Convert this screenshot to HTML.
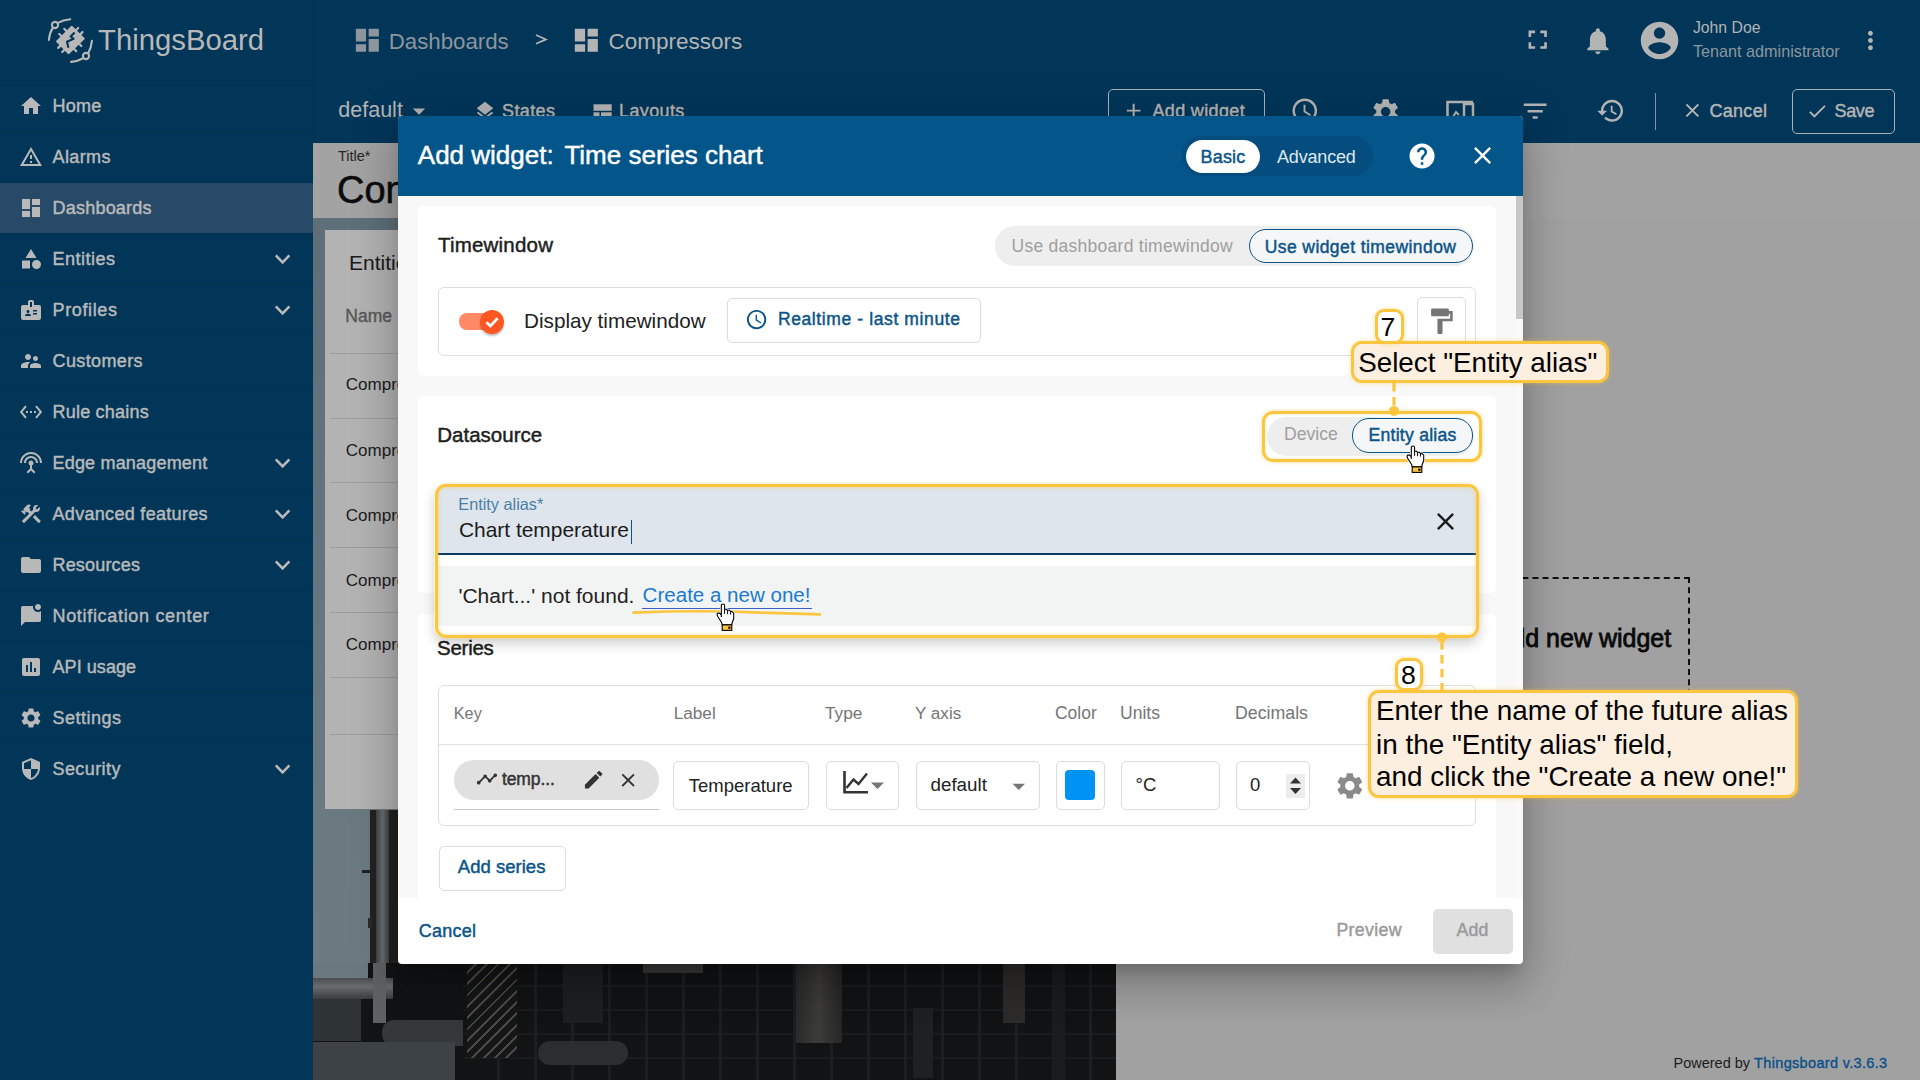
<!DOCTYPE html>
<html><head><meta charset="utf-8">
<style>
*{box-sizing:border-box;margin:0;padding:0}
html,body{width:1920px;height:1080px;overflow:hidden;font-family:"Liberation Sans",sans-serif;background:#a1a1a1;position:relative}
.a{position:absolute}
svg{display:block;position:absolute}
.nw{white-space:nowrap}
/* sidebar */
#side{left:0;top:0;width:313px;height:1080px;background:#013659}
.mi{position:absolute;left:0;width:313px;height:51px;color:#b9b9b9;font-size:18px;-webkit-text-stroke:0.45px #b9b9b9}
.mi svg.ic{left:19px;top:13px;width:24px;height:24px;fill:#b9b9b9}
.mi .tx{position:absolute;left:52.5px;top:14.9px;white-space:nowrap;line-height:20px}
.mi svg.ch{left:274px;top:13px;width:26px;height:26px}
.mi .ln{position:absolute;left:0;bottom:0;width:313px;height:1px;background:#03324f}
#top{left:313px;top:0;width:1607px;height:143px;background:#013659}
.ti{fill:#b4b4b4}
</style></head>
<body>
<!-- dashboard background -->
<div class="a" style="left:313px;top:143px;width:1607px;height:937px;background:#a1a1a1"></div>
<!-- photo -->
<div class="a" id="photo" style="left:313px;top:218px;width:803px;height:862px;overflow:hidden;background:linear-gradient(180deg,#5e6f7a 0%,#65757f 40%,#6b7981 70%,#6f7b83 100%)">
  <!-- tower left strip -->
  <div class="a" style="left:57px;top:592px;width:30px;height:170px;background:#24221f"></div>
  <div class="a" style="left:63px;top:592px;width:13px;height:170px;background:linear-gradient(90deg,#3e4244,#6a6e70 50%,#3e4244)"></div>
  <div class="a" style="left:49px;top:652px;width:10px;height:3px;background:#222"></div>
  <div class="a" style="left:49px;top:700px;width:10px;height:10px;background:#2a2a2a"></div>
  <!-- bottom strip -->
  <div class="a" style="left:0;top:745px;width:803px;height:117px;background:#111315"></div>
  <div class="a" style="left:150px;top:745px;width:653px;height:117px;background:repeating-linear-gradient(90deg,transparent 0 34px,#1c1f22 34px 37px),repeating-linear-gradient(180deg,transparent 0 22px,#1a1d20 22px 24px)"></div>
  <div class="a" style="left:0;top:690px;width:55px;height:70px;background:#6e7a82"></div>
  <div class="a" style="left:20px;top:760px;width:60px;height:21px;background:linear-gradient(180deg,#4a4d50,#6a6c6e 40%,#3a3c3e)"></div>
  <div class="a" style="left:0;top:745px;width:55px;height:16px;background:#6b7880"></div>
  <div class="a" style="left:0;top:760px;width:62px;height:21px;background:linear-gradient(180deg,#4a4d50,#6a6c6e 40%,#3a3c3e)"></div>
  <div class="a" style="left:0;top:781px;width:48px;height:42px;background:#2e3336"></div>
  <div class="a" style="left:60px;top:745px;width:13px;height:60px;background:#5e6264"></div>
  <div class="a" style="left:69px;top:802px;width:81px;height:26px;background:#35383a;border-radius:12px 0 0 12px"></div>
  <div class="a" style="left:0;top:824px;width:142px;height:38px;background:#3d4246"></div>
  <div class="a" style="left:154px;top:745px;width:50px;height:95px;background:repeating-linear-gradient(135deg,#151617 0 6px,#4d4840 6px 8px)"></div>
  <div class="a" style="left:225px;top:823px;width:90px;height:24px;background:#2b2e31;border-radius:12px"></div>
  <div class="a" style="left:250px;top:745px;width:40px;height:60px;background:#1d1f21"></div>
  <div class="a" style="left:483px;top:745px;width:46px;height:80px;background:linear-gradient(90deg,#2a2a2a,#3d3c3b 50%,#262626)"></div>
  <div class="a" style="left:690px;top:745px;width:22px;height:60px;background:#2e2c2a"></div>
  <div class="a" style="left:330px;top:745px;width:60px;height:10px;background:#3b3a38"></div>
  <div class="a" style="left:600px;top:790px;width:20px;height:70px;background:#1d2124"></div>
  <div class="a" style="left:740px;top:745px;width:12px;height:117px;background:#1a1d20"></div>
</div>
<!-- title band -->
<div class="a" style="left:313px;top:143px;width:1607px;height:75px;background:#a3a3a3"></div>
<div class="a nw" style="left:338px;top:149px;font-size:14.5px;line-height:14.5px;color:#262626">Title*</div>
<div class="a nw" style="left:337px;top:171.3px;font-size:38px;line-height:38px;color:#0c0c0c;-webkit-text-stroke:0.6px #0c0c0c">Compressors</div>
<!-- entities card -->
<div class="a" style="left:325px;top:230px;width:400px;height:579px;background:#b3b3b3">
  <div class="a nw" style="left:24px;top:21.6px;font-size:21px;line-height:21px;color:#1a1a1a">Entities</div>
  <div class="a nw" style="left:20.3px;top:78px;font-size:17.5px;line-height:17.5px;color:#595959;-webkit-text-stroke:0.4px #595959">Name</div>
  <div class="a" style="left:5px;top:123px;width:395px;height:1px;background:#9c9c9c"></div>
  <div class="a nw" style="left:20.8px;top:146.4px;font-size:17px;line-height:17px;color:#1c1c1c">Compressor 1</div>
  <div class="a" style="left:5px;top:188px;width:395px;height:1px;background:#9c9c9c"></div>
  <div class="a nw" style="left:20.8px;top:211.6px;font-size:17px;line-height:17px;color:#1c1c1c">Compressor 2</div>
  <div class="a" style="left:5px;top:252px;width:395px;height:1px;background:#9c9c9c"></div>
  <div class="a nw" style="left:20.8px;top:276.6px;font-size:17px;line-height:17px;color:#1c1c1c">Compressor 3</div>
  <div class="a" style="left:5px;top:317px;width:395px;height:1px;background:#9c9c9c"></div>
  <div class="a nw" style="left:20.8px;top:341.6px;font-size:17px;line-height:17px;color:#1c1c1c">Compressor 4</div>
  <div class="a" style="left:5px;top:382px;width:395px;height:1px;background:#9c9c9c"></div>
  <div class="a nw" style="left:20.8px;top:406.1px;font-size:17px;line-height:17px;color:#1c1c1c">Compressor 5</div>
  <div class="a" style="left:5px;top:447px;width:395px;height:1px;background:#9c9c9c"></div>
  <div class="a" style="left:5px;top:504px;width:395px;height:1px;background:#9c9c9c"></div>
</div>
<!-- add new widget dashed -->
<div class="a" style="left:1300px;top:577px;width:390px;height:180px;border:2.2px dashed #111"></div>
<div class="a nw" style="left:1494.7px;top:625.5px;font-size:25px;line-height:25px;color:#0a0a0a;-webkit-text-stroke:0.8px #0a0a0a">Add new widget</div>

<!-- sidebar -->
<div id="side" class="a">
  <div class="a" style="left:0;top:80px;width:313px;height:1px;background:#03304e"></div><div class="a" style="left:0;top:233px;width:313px;height:1px;background:#02324f"></div><div class="a" style="left:0;top:284px;width:313px;height:1px;background:#02324f"></div><div class="a" style="left:0;top:335px;width:313px;height:1px;background:#02324f"></div><div class="a" style="left:0;top:386px;width:313px;height:1px;background:#02324f"></div><div class="a" style="left:0;top:437px;width:313px;height:1px;background:#02324f"></div><div class="a" style="left:0;top:488px;width:313px;height:1px;background:#02324f"></div><div class="a" style="left:0;top:539px;width:313px;height:1px;background:#02324f"></div><div class="a" style="left:0;top:590px;width:313px;height:1px;background:#02324f"></div><div class="a" style="left:0;top:641px;width:313px;height:1px;background:#02324f"></div><div class="a" style="left:0;top:692px;width:313px;height:1px;background:#02324f"></div><div class="a" style="left:0;top:743px;width:313px;height:1px;background:#02324f"></div><div class="a" style="left:0;top:131px;width:313px;height:1px;background:#02324f"></div><div class="a" style="left:0;top:182px;width:313px;height:1px;background:#02324f"></div>
  <div class="mi" style="top:81px;"><svg class="ic" viewBox="0 0 24 24"><path d="M10 20v-6h4v6h5v-8h3L12 3 2 12h3v8z"/></svg><div class="tx" style="letter-spacing:0.23px">Home</div></div>
  <div class="mi" style="top:132px;"><svg class="ic" viewBox="0 0 24 24"><path d="M12 5.99L19.53 19H4.47L12 5.99M12 2L1 21h22L12 2zm1 14h-2v2h2v-2zm0-6h-2v4h2v-4z"/></svg><div class="tx" style="letter-spacing:0.40px">Alarms</div></div>
  <div class="mi" style="top:183px;"><div class="a" style="left:0;top:0;width:313px;height:50px;background:#284a69"></div><svg class="ic" viewBox="0 0 24 24"><path d="M3 13h8V3H3v10zm0 8h8v-6H3v6zm10 0h8V11h-8v10zm0-18v6h8V3h-8z"/></svg><div class="tx" style="letter-spacing:0.22px">Dashboards</div></div>
  <div class="mi" style="top:234px;"><svg class="ic" viewBox="0 0 24 24"><path d="M12 2l-5.5 9h11zM17.5 13a4.5 4.5 0 1 0 0 9a4.5 4.5 0 1 0 0-9zM3 13.5h8v8H3z"/></svg><div class="tx" style="letter-spacing:0.51px">Entities</div><svg class="ch" viewBox="0 0 26 26"><path d="M1.8 8.4 L8.6 15.3 L15.4 8.4" fill="none" stroke="#b9b9b9" stroke-width="2.6"/></svg></div>
  <div class="mi" style="top:285px;"><svg class="ic" viewBox="0 0 24 24"><path d="M20 7h-5V4c0-1.1-.9-2-2-2h-2c-1.1 0-2 .9-2 2v3H4c-1.1 0-2 .9-2 2v11c0 1.1.9 2 2 2h16c1.1 0 2-.9 2-2V9c0-1.1-.9-2-2-2zM9 12c.83 0 1.5.67 1.5 1.5S9.83 15 9 15s-1.5-.67-1.5-1.5S8.17 12 9 12zm3 6H6v-.43c0-.6.36-1.15.92-1.39.64-.28 1.34-.43 2.08-.43s1.44.15 2.08.43c.55.24.92.78.92 1.39V18zm1-9h-2V4h2v5zm5 7.5h-4V15h4v1.5zm0-3h-4V12h4v1.5z"/></svg><div class="tx" style="letter-spacing:0.64px">Profiles</div><svg class="ch" viewBox="0 0 26 26"><path d="M1.8 8.4 L8.6 15.3 L15.4 8.4" fill="none" stroke="#b9b9b9" stroke-width="2.6"/></svg></div>
  <div class="mi" style="top:336px;"><svg class="ic" viewBox="0 0 24 24"><path d="M16.5 12c1.38 0 2.49-1.12 2.49-2.5S17.88 7 16.5 7C15.12 7 14 8.12 14 9.5s1.12 2.5 2.5 2.5zM9 11c1.66 0 2.99-1.34 2.99-3S10.66 5 9 5C7.34 5 6 6.34 6 8s1.34 3 3 3zm7.5 3c-1.83 0-5.5.92-5.5 2.75V19h11v-2.25c0-1.83-3.67-2.75-5.5-2.75zM9 13c-2.34 0-7 1.17-7 3.5V19h7v-2.25c0-.85.33-2.34 2.37-3.47C10.5 13.1 9.66 13 9 13z"/></svg><div class="tx" style="letter-spacing:0.38px">Customers</div></div>
  <div class="mi" style="top:387px;"><svg class="ic" viewBox="0 0 24 24"><path d="M7.77 6.76L6.23 5.48.82 12l5.41 6.52 1.54-1.28L3.42 12l4.35-5.24zM7 13h2v-2H7v2zm10-2h-2v2h2v-2zm-6 2h2v-2h-2v2zm6.77-7.52l-1.54 1.28L20.58 12l-4.35 5.24 1.54 1.28L23.18 12l-5.41-6.52z"/></svg><div class="tx" style="letter-spacing:0.22px">Rule chains</div></div>
  <div class="mi" style="top:438px;"><svg class="ic" viewBox="0 0 24 24"><path d="M12 5c-3.87 0-7 3.13-7 7h2c0-2.76 2.24-5 5-5s5 2.24 5 5h2c0-3.87-3.13-7-7-7zm1 9.29c.88-.39 1.5-1.26 1.5-2.29 0-1.38-1.12-2.5-2.5-2.5S9.5 10.62 9.5 12c0 1.02.62 1.9 1.5 2.29v3.3L7.59 21 9 22.41l3-3 3 3L16.41 21 13 17.59v-3.3zM12 1C5.93 1 1 5.93 1 12h2c0-4.97 4.03-9 9-9s9 4.03 9 9h2c0-6.07-4.93-11-11-11z"/></svg><div class="tx" style="letter-spacing:0.19px">Edge management</div><svg class="ch" viewBox="0 0 26 26"><path d="M1.8 8.4 L8.6 15.3 L15.4 8.4" fill="none" stroke="#b9b9b9" stroke-width="2.6"/></svg></div>
  <div class="mi" style="top:489px;"><svg class="ic" viewBox="0 0 24 24"><path d="M13.783 15.172l2.121-2.121 5.996 5.996-2.121 2.121zM17.5 10c1.93 0 3.5-1.57 3.5-3.5 0-.58-.16-1.12-.41-1.6l-2.7 2.7-1.49-1.49 2.7-2.7c-.48-.25-1.02-.41-1.6-.41C15.57 3 14 4.57 14 6.5c0 .41.08.8.21 1.16l-1.85 1.85-1.78-1.78.71-.71-1.41-1.41L12 3.49c-1.17-1.17-3.07-1.170-4.24 0L4.22 7.03l1.41 1.41H2.81l-.71.71 3.54 3.54.71-.71V9.15l1.41 1.41.71-.71 1.78 1.78-7.41 7.41 2.12 2.12L16.34 9.79c.36.13.75.21 1.16.21z"/></svg><div class="tx" style="letter-spacing:0.31px">Advanced features</div><svg class="ch" viewBox="0 0 26 26"><path d="M1.8 8.4 L8.6 15.3 L15.4 8.4" fill="none" stroke="#b9b9b9" stroke-width="2.6"/></svg></div>
  <div class="mi" style="top:540px;"><svg class="ic" viewBox="0 0 24 24"><path d="M10 4H4c-1.1 0-1.99.9-1.99 2L2 18c0 1.1.9 2 2 2h16c1.1 0 2-.9 2-2V8c0-1.1-.9-2-2-2h-8l-2-2z"/></svg><div class="tx" style="letter-spacing:0.18px">Resources</div><svg class="ch" viewBox="0 0 26 26"><path d="M1.8 8.4 L8.6 15.3 L15.4 8.4" fill="none" stroke="#b9b9b9" stroke-width="2.6"/></svg></div>
  <div class="mi" style="top:591px;"><svg class="ic" viewBox="0 0 24 24"><path d="M22 6.98V16c0 1.1-.9 2-2 2H6l-4 4V4c0-1.1.9-2 2-2h10.1c-.06.32-.1.66-.1 1 0 2.76 2.24 5 5 5 1.13 0 2.16-.39 3-1.02zM16 3c0 1.66 1.34 3 3 3s3-1.34 3-3-1.34-3-3-3-3 1.34-3 3z"/></svg><div class="tx" style="letter-spacing:0.68px">Notification center</div></div>
  <div class="mi" style="top:642px;"><svg class="ic" viewBox="0 0 24 24"><path d="M19 3H5c-1.1 0-2 .9-2 2v14c0 1.1.9 2 2 2h14c1.1 0 2-.9 2-2V5c0-1.1-.9-2-2-2zM9 17H7v-7h2v7zm4 0h-2V7h2v10zm4 0h-2v-4h2v4z"/></svg><div class="tx" style="letter-spacing:0.06px">API usage</div></div>
  <div class="mi" style="top:693px;"><svg class="ic" viewBox="0 0 24 24"><path d="M19.14 12.94c.04-.3.06-.61.06-.94 0-.32-.02-.64-.07-.94l2.03-1.58c.18-.14.23-.41.12-.61l-1.92-3.32c-.12-.22-.37-.29-.59-.22l-2.39.96c-.5-.38-1.03-.7-1.62-.94l-.36-2.54c-.04-.24-.24-.41-.48-.41h-3.84c-.24 0-.43.17-.47.41l-.36 2.54c-.59.24-1.13.57-1.62.94l-2.39-.96c-.22-.08-.47 0-.59.22L2.74 8.87c-.12.21-.08.47.12.61l2.03 1.58c-.05.3-.09.63-.09.94s.02.64.07.94l-2.03 1.58c-.18.14-.23.41-.12.61l1.92 3.32c.12.22.37.29.59.22l2.39-.96c.5.38 1.03.7 1.62.94l.36 2.54c.05.24.24.41.48.41h3.84c.24 0 .44-.17.47-.41l.36-2.54c.59-.24 1.13-.56 1.62-.94l2.39.96c.22.08.47 0 .59-.22l1.92-3.32c.12-.22.07-.47-.12-.61l-2.01-1.58zM12 15.6c-1.98 0-3.6-1.62-3.6-3.6s1.62-3.6 3.6-3.6 3.6 1.62 3.6 3.6-1.62 3.6-3.6 3.6z"/></svg><div class="tx" style="letter-spacing:0.51px">Settings</div></div>
  <div class="mi" style="top:744px;"><svg class="ic" viewBox="0 0 24 24"><path d="M12 1L3 5v6c0 5.55 3.84 10.74 9 12 5.16-1.26 9-6.45 9-12V5l-9-4zm0 10.99h7c-.53 4.12-3.28 7.790-7 8.94V12H5V6.3l7-3.11v8.8z"/></svg><div class="tx" style="letter-spacing:0.41px">Security</div><svg class="ch" viewBox="0 0 26 26"><path d="M1.8 8.4 L8.6 15.3 L15.4 8.4" fill="none" stroke="#b9b9b9" stroke-width="2.6"/></svg></div>
</div>
<!-- top bar -->
<div id="top" class="a"></div>
<div class="a" style="left:313px;top:0;width:1px;height:143px;background:#032f4d"></div>

<!-- logo -->
<svg style="left:40px;top:10px;width:60px;height:60px" viewBox="0 0 60 60">
  <g fill="none" stroke="#b8b8b8" stroke-width="2.1" stroke-linecap="round">
    <path d="M30.3 9.2 Q23 9.8 18 12.8"/>
    <circle cx="15" cy="15" r="3.1"/>
    <path d="M12.9 17.6 Q9.4 23 8.9 30"/>
    <path d="M51.9 30.8 Q51.2 38 48.2 43.2"/>
    <circle cx="46" cy="46" r="3.1"/>
    <path d="M43.2 48.2 Q37 51.5 31.1 51.9"/>
    <path d="M21.5 26.3 L19.2 24 M26.6 21.2 L24.3 18.9 M35.9 20.3 L38.2 18 M40.2 24.4 L42.5 22.1 M39.1 33.7 L41.4 36 M33.9 38.8 L36.2 41.1 M24.5 39.7 L22.2 42 M20.5 35.6 L18.2 37.9" stroke-width="2.2"/>
  </g>
  <path d="M31.7 16.6 L43.9 28.6 L28.6 43.4 L16.9 31.4 Z" fill="#b8b8b8" stroke="#b8b8b8" stroke-width="1.6" stroke-linejoin="round"/>
  <path d="M34.6 22.6 L30.6 26.4 L33.6 28.8 L27 31.8 L28.4 37.8" fill="none" stroke="#013659" stroke-width="2.1" stroke-linejoin="round"/>
</svg>
<div class="a nw" style="left:98px;top:25px;font-size:29.3px;line-height:29.3px;color:#b8b8b8">ThingsBoard</div>

<!-- breadcrumb -->
<svg style="left:352px;top:25px;width:30.7px;height:30.7px;fill:#8e959c" viewBox="0 0 24 24"><path d="M3 13h8V3H3v10zm0 8h8v-6H3v6zm10 0h8V11h-8v10zm0-18v6h8V3h-8z"/></svg>
<div class="a nw" style="left:388.7px;top:30.9px;font-size:22.25px;line-height:22.25px;color:#8e959c">Dashboards</div>
<svg style="left:530px;top:30px;width:22px;height:20px" viewBox="530 30 22 20"><path d="M536 35 L546 39.4 L536 43.7" fill="none" stroke="#b4b4b4" stroke-width="1.7"/></svg>
<svg style="left:571.2px;top:25px;width:30.7px;height:30.7px;fill:#b4b4b4" viewBox="0 0 24 24"><path d="M3 13h8V3H3v10zm0 8h8v-6H3v6zm10 0h8V11h-8v10zm0-18v6h8V3h-8z"/></svg>
<div class="a nw" style="left:608.4px;top:30.7px;font-size:22.5px;line-height:22.5px;color:#b4b4b4">Compressors</div>

<!-- right header -->
<svg style="left:1521.8px;top:23.8px;width:31.4px;height:31.4px;fill:#b4b4b4" viewBox="0 0 24 24"><path d="M7 14H5v5h5v-2H7v-3zm-2-4h2V7h3V5H5v5zm12 7h-3v2h5v-5h-2v3zM14 5v2h3v3h2V5h-5z"/></svg>
<svg style="left:1581.5px;top:24.6px;width:31.8px;height:31.8px;fill:#b4b4b4" viewBox="0 0 24 24"><path d="M12 22c1.1 0 2-.9 2-2h-4c0 1.1.89 2 2 2zm6-6v-5c0-3.07-1.64-5.64-4.5-6.32V4c0-.83-.67-1.5-1.5-1.5s-1.5.67-1.5 1.5v.68C7.63 5.36 6 7.92 6 11v5l-2 2v1h16v-1l-2-2z"/></svg>
<svg style="left:1637.2px;top:17.8px;width:45.1px;height:45.1px;fill:#b4b4b4" viewBox="0 0 24 24"><path d="M12 2C6.48 2 2 6.48 2 12s4.48 10 10 10 10-4.48 10-10S17.52 2 12 2zm0 3c1.66 0 3 1.34 3 3s-1.34 3-3 3-3-1.34-3-3 1.34-3 3-3zm0 14.2c-2.5 0-4.71-1.28-6-3.22.03-1.99 4-3.08 6-3.08 1.99 0 5.970 1.09 6 3.08-1.29 1.94-3.5 3.22-6 3.22z"/></svg>
<div class="a nw" style="left:1692.9px;top:20px;font-size:15.8px;line-height:15.8px;color:#b4b4b4">John Doe</div>
<div class="a nw" style="left:1693px;top:43.4px;font-size:16.2px;line-height:16.2px;color:#8e969d">Tenant administrator</div>
<svg style="left:1855.9px;top:25.5px;width:28.9px;height:28.9px;fill:#b4b4b4" viewBox="0 0 24 24"><path d="M12 8c1.1 0 2-.9 2-2s-.9-2-2-2-2 .9-2 2 .9 2 2 2zm0 2c-1.1 0-2 .9-2 2s.9 2 2 2 2-.9 2-2-.9-2-2-2zm0 6c-1.1 0-2 .9-2 2s.9 2 2 2 2-.9 2-2-.9-2-2-2z"/></svg>

<!-- row 2 -->
<div class="a nw" style="left:338.3px;top:100px;font-size:21.5px;line-height:21.5px;color:#b4b4b4">default</div>
<svg style="left:404px;top:95.5px;width:30px;height:30px;fill:#b4b4b4" viewBox="0 0 24 24"><path d="M7 10l5 5 5-5z"/></svg>
<svg style="left:474px;top:99.7px;width:22px;height:22px;fill:#b4b4b4" viewBox="0 0 24 24"><path d="M11.99 18.54l-7.37-5.730L3 14.07l9 7 9-7-1.63-1.27-7.38 5.74zM12 16l7.36-5.73L21 9l-9-7-9 7 1.63 1.27L12 16z"/></svg>
<div class="a nw" style="left:502.0px;top:102.4px;font-size:18px;line-height:18px;letter-spacing:0.40px;color:#b4b4b4;-webkit-text-stroke:0.45px #b4b4b4">States</div>
<svg style="left:593px;top:104px;width:20px;height:16px;fill:#b4b4b4" viewBox="0 0 20 16"><rect x="0.5" y="0.3" width="18.2" height="6.5"/><rect x="0.5" y="8.3" width="6" height="7"/><rect x="8" y="8.3" width="10.7" height="7"/></svg>
<div class="a nw" style="left:619.0px;top:102.4px;font-size:18px;line-height:18px;letter-spacing:0.37px;color:#b4b4b4;-webkit-text-stroke:0.45px #b4b4b4">Layouts</div>

<div class="a" style="left:1108px;top:89px;width:157px;height:45px;border:1.3px solid #a9b1b8;border-radius:5px"></div>
<svg style="left:1122px;top:99px;width:23.3px;height:23.3px;fill:#b4b4b4" viewBox="0 0 24 24"><path d="M19 13h-6v6h-2v-6H5v-2h6V5h2v6h6v2z"/></svg>
<div class="a nw" style="left:1152.4px;top:102.0px;font-size:18px;line-height:18px;letter-spacing:0.36px;color:#b4b4b4;-webkit-text-stroke:0.45px #b4b4b4">Add widget</div>
<svg style="left:1290.1px;top:95.7px;width:29.6px;height:29.6px;fill:#b4b4b4" viewBox="0 0 24 24"><path d="M11.99 2C6.47 2 2 6.48 2 12s4.47 10 9.99 10C17.52 22 22 17.52 22 12S17.52 2 11.99 2zM12 20c-4.42 0-8-3.58-8-8s3.58-8 8-8 8 3.58 8 8-3.58 8-8 8zm.5-13H11v6l5.25 3.15.75-1.23-4.5-2.67z"/></svg>
<svg style="left:1369.5px;top:95.6px;width:31.3px;height:31.3px;fill:#b4b4b4" viewBox="0 0 24 24"><path d="M19.14 12.94c.04-.3.06-.61.06-.94 0-.32-.02-.64-.07-.94l2.03-1.58c.18-.14.23-.41.12-.61l-1.92-3.32c-.12-.22-.37-.29-.59-.22l-2.39.96c-.5-.38-1.03-.7-1.62-.94l-.36-2.54c-.04-.24-.24-.41-.48-.41h-3.84c-.24 0-.43.17-.47.41l-.36 2.54c-.59.24-1.13.57-1.62.94l-2.39-.96c-.22-.08-.47 0-.59.22L2.74 8.87c-.12.21-.08.47.12.61l2.03 1.58c-.05.3-.09.63-.09.94s.02.64.07.94l-2.03 1.58c-.18.14-.23.41-.12.61l1.92 3.32c.12.22.37.29.59.22l2.39-.96c.5.38 1.03.7 1.62.94l.36 2.54c.05.24.24.41.48.41h3.84c.24 0 .44-.17.47-.41l.36-2.54c.59-.24 1.13-.56 1.62-.94l2.39.96c.22.08.47 0 .59-.22l1.92-3.32c.12-.22.07-.47-.12-.61l-2.01-1.58zM12 15.6c-1.98 0-3.6-1.62-3.6-3.6s1.62-3.6 3.6-3.6 3.6 1.62 3.6 3.6-1.62 3.6-3.6 3.6z"/></svg>
<svg style="left:1446px;top:100px;width:30px;height:20px" viewBox="0 0 30 20"><path d="M1.5 16 V2 H27" fill="none" stroke="#b4b4b4" stroke-width="2.6"/><rect x="18" y="4" width="9" height="14" fill="none" stroke="#b4b4b4" stroke-width="2.5"/><path d="M7 17 L10 12 L13 15" fill="none" stroke="#b4b4b4" stroke-width="2"/></svg>
<svg style="left:1519.9px;top:95.7px;width:30.3px;height:30.3px;fill:#b4b4b4" viewBox="0 0 24 24"><path d="M10 18h4v-2h-4v2zM3 6v2h18V6H3zm3 7h12v-2H6v2z"/></svg>
<svg style="left:1595.6px;top:95.9px;width:29.5px;height:29.5px;fill:#b4b4b4" viewBox="0 0 24 24"><path d="M13 3c-4.97 0-9 4.03-9 9H1l3.89 3.89.07.14L9 12H6c0-3.87 3.13-7 7-7s7 3.13 7 7-3.13 7-7 7c-1.93 0-3.68-.79-4.94-2.06l-1.42 1.42C8.27 19.99 10.51 21 13 21c4.97 0 9-4.03 9-9s-4.03-9-9-9zm-1 5v5l4.28 2.54.72-1.21-3.5-2.08V8H12z"/></svg>
<div class="a" style="left:1655px;top:93px;width:1.2px;height:37px;background:#8294a3"></div>
<svg style="left:1680.75px;top:99.1px;width:22.8px;height:22.8px;fill:#b4b4b4" viewBox="0 0 24 24"><path d="M19 6.41L17.590 5 12 10.59 6.41 5 5 6.41 10.59 12 5 17.59 6.41 19 12 13.41 17.59 19 19 17.59 13.41 12z"/></svg>
<div class="a nw" style="left:1709.4px;top:101.7px;font-size:18px;line-height:18px;letter-spacing:0.32px;color:#b4b4b4;-webkit-text-stroke:0.45px #b4b4b4">Cancel</div>
<div class="a" style="left:1792px;top:89px;width:103px;height:45px;border:1.3px solid #a9b1b8;border-radius:5px"></div>
<svg style="left:1806.3px;top:99.5px;width:22.4px;height:22.4px;fill:#b4b4b4" viewBox="0 0 24 24"><path d="M9 16.17L4.83 12l-1.42 1.41L9 19 21 7l-1.41-1.41z"/></svg>
<div class="a nw" style="left:1834.5px;top:101.7px;font-size:18px;line-height:18px;letter-spacing:-0.33px;color:#b4b4b4;-webkit-text-stroke:0.45px #b4b4b4">Save</div>



<!-- ============ MODAL ============ -->
<div class="a" style="left:398px;top:116px;width:1125px;height:848px;background:#fff;border-radius:4px;box-shadow:0 11px 15px -7px rgba(0,0,0,.2),0 24px 38px 3px rgba(0,0,0,.14),0 9px 46px 8px rgba(0,0,0,.12)"></div>
<div class="a" style="left:398px;top:116px;width:1125px;height:80px;background:#03558a;border-radius:4px 4px 0 0"></div>
<div class="a nw" style="left:417.8px;top:142.0px;font-size:26px;line-height:26px;color:#fff;-webkit-text-stroke:0.45px #fff">Add widget:</div><div class="a nw" style="left:564.4px;top:142.0px;font-size:26px;line-height:26px;color:#fff;-webkit-text-stroke:0.45px #fff">Time series chart</div>
<div class="a" style="left:1182px;top:136px;width:191px;height:40px;background:#044d7e;border-radius:20px"></div>
<div class="a" style="left:1185.7px;top:140px;width:74.3px;height:33px;background:#fff;border-radius:17px"></div>
<div class="a nw" style="left:1200.6px;top:147.6px;font-size:18px;line-height:18px;letter-spacing:0.15px;color:#0b5488;-webkit-text-stroke:0.45px #0b5488">Basic</div>
<div class="a nw" style="left:1277px;top:147.6px;font-size:18px;line-height:18px;letter-spacing:-0.17px;color:#dfe8ef">Advanced</div>
<svg style="left:1407.4px;top:140.8px;width:30.1px;height:30.1px;fill:#fff" viewBox="0 0 24 24"><path d="M12 2C6.48 2 2 6.48 2 12s4.48 10 10 10 10-4.48 10-10S17.52 2 12 2zm1 17h-2v-2h2v2zm2.07-7.75l-.9.92C13.45 12.9 13 13.5 13 15h-2v-.5c0-1.1.45-2.1 1.17-2.83l1.24-1.26c.37-.36.59-.86.59-1.41 0-1.1-.9-2-2-2s-2 .9-2 2H8c0-2.21 1.79-4 4-4s4 1.79 4 4c0 .88-.36 1.68-.93 2.25z"/></svg>
<svg style="left:1467.9px;top:141.3px;width:29.1px;height:29.1px;fill:#fff" viewBox="0 0 24 24"><path d="M19 6.41L17.59 5 12 10.59 6.41 5 5 6.41 10.59 12 5 17.59 6.41 19 12 13.41 17.59 19 19 17.59 13.41 12z"/></svg>

<!-- body -->
<div class="a" style="left:398px;top:196px;width:1118px;height:702px;background:#f8f8f8"></div>
<div class="a" style="left:1516px;top:196px;width:7px;height:702px;background:#fafafa"></div>
<div class="a" style="left:1516px;top:196px;width:7px;height:123px;background:#c7c7c7"></div>

<!-- card 1 timewindow -->
<div class="a" style="left:418px;top:206px;width:1078px;height:170px;background:#fff;border-radius:5px"></div>
<div class="a nw" style="left:438.0px;top:235.4px;font-size:20.5px;line-height:20.5px;letter-spacing:0.20px;color:#1d1d1d;-webkit-text-stroke:0.45px #1d1d1d">Timewindow</div>
<div class="a" style="left:995px;top:226px;width:478.5px;height:40px;background:#eeeeee;border-radius:20px"></div>
<div class="a" style="left:1249px;top:229.3px;width:224px;height:34px;background:#f4f6f8;border:1.3px solid #0b5488;border-radius:17px"></div>
<div class="a nw" style="left:1011.6px;top:237.6px;font-size:17.5px;line-height:17.5px;letter-spacing:0.26px;color:#9e9e9e">Use dashboard timewindow</div>
<div class="a nw" style="left:1264.7px;top:238.5px;font-size:17.5px;line-height:17.5px;letter-spacing:0.42px;color:#0b5488;-webkit-text-stroke:0.45px #0b5488">Use widget timewindow</div>

<div class="a" style="left:438px;top:286.5px;width:1037.5px;height:69px;border:1.2px solid #dedede;border-radius:6px"></div>
<div class="a" style="left:459px;top:313.3px;width:39px;height:16.3px;background:#ff8a65;border-radius:8px"></div>
<div class="a" style="left:480px;top:309.5px;width:24px;height:24px;background:#ff5722;border-radius:50%;box-shadow:0 2px 2px rgba(0,0,0,.25)"></div>
<svg style="left:480px;top:309.5px;width:24px;height:24px" viewBox="0 0 24 24"><path d="M6.5 12.2 L10.3 16 L17.6 8.3" fill="none" stroke="#fff" stroke-width="2.7"/></svg>
<div class="a nw" style="left:524px;top:311.2px;font-size:20.7px;line-height:20.7px;color:#222">Display timewindow</div>
<div class="a" style="left:727px;top:298px;width:253.5px;height:44.5px;border:1.2px solid #dcdcdc;border-radius:5px"></div>
<svg style="left:744.8px;top:308.4px;width:23.2px;height:23.2px;fill:#0b5488" viewBox="0 0 24 24"><path d="M11.99 2C6.47 2 2 6.48 2 12s4.47 10 9.99 10C17.52 22 22 17.52 22 12S17.52 2 11.99 2zM12 20c-4.42 0-8-3.58-8-8s3.58-8 8-8 8 3.58 8 8-3.58 8-8 8zm.5-13H11v6l5.25 3.15.75-1.23-4.5-2.67z"/></svg>
<div class="a nw" style="left:777.9px;top:310.8px;font-size:17.5px;line-height:17.5px;letter-spacing:0.61px;color:#0b5488;-webkit-text-stroke:0.45px #0b5488">Realtime - last minute</div>
<div class="a" style="left:1416.5px;top:296.5px;width:49.2px;height:49px;border:1.2px solid #dcdcdc;border-radius:5px"></div>
<svg style="left:1425.7px;top:305.5px;width:30.5px;height:30.5px;fill:#757575" viewBox="0 0 24 24"><path d="M18 4V3c0-.55-.45-1-1-1H5c-.55 0-1 .45-1 1v4c0 .55.45 1 1 1h12c.55 0 1-.45 1-1V6h1v4H9v11c0 .55.45 1 1 1h2c.55 0 1-.45 1-1v-9h8V4h-3z"/></svg>

<!-- card 2 datasource -->
<div class="a" style="left:418px;top:396px;width:1078px;height:196.5px;background:#fff;border-radius:5px"></div>
<div class="a nw" style="left:437.3px;top:425.3px;font-size:20.5px;line-height:20.5px;letter-spacing:0.00px;color:#1d1d1d;-webkit-text-stroke:0.45px #1d1d1d">Datasource</div>
<div class="a" style="left:1267.2px;top:416.6px;width:207.2px;height:39px;background:#eeeeee;border-radius:20px"></div>
<div class="a" style="left:1352px;top:418.1px;width:121px;height:34.7px;background:#f4f6f8;border:1.3px solid #0b5488;border-radius:17px"></div>
<div class="a nw" style="left:1284px;top:425.9px;font-size:17.6px;line-height:17.6px;color:#9e9e9e">Device</div>
<div class="a nw" style="left:1368.5px;top:426.7px;font-size:17.6px;line-height:17.6px;letter-spacing:0.25px;color:#0b5488;-webkit-text-stroke:0.45px #0b5488">Entity alias</div>

<!-- card 3 series -->
<div class="a" style="left:418px;top:614px;width:1078px;height:284px;background:#fff;border-radius:5px 5px 0 0"></div>
<div class="a nw" style="left:437.0px;top:638.4px;font-size:20.5px;line-height:20.5px;letter-spacing:-0.25px;color:#1d1d1d;-webkit-text-stroke:0.45px #1d1d1d">Series</div>
<div class="a" style="left:438px;top:684.5px;width:1037.5px;height:141px;border:1.2px solid #dedede;border-radius:6px"></div>
<div class="a" style="left:439px;top:744px;width:1036px;height:1.2px;background:#e0e0e0"></div>
<div class="a nw" style="left:453.75px;top:705.4px;font-size:16.25px;line-height:17.3px;color:#757575">Key</div>
<div class="a nw" style="left:673.75px;top:705.4px;font-size:17.16px;line-height:17.3px;color:#757575">Label</div>
<div class="a nw" style="left:825px;top:705.4px;font-size:17.3px;line-height:17.3px;color:#757575">Type</div>
<div class="a nw" style="left:915px;top:705.4px;font-size:17.1px;line-height:17.3px;color:#757575">Y axis</div>
<div class="a nw" style="left:1055px;top:705.4px;font-size:17.47px;line-height:17.3px;color:#757575">Color</div>
<div class="a nw" style="left:1120px;top:705.4px;font-size:17.56px;line-height:17.3px;color:#757575">Units</div>
<div class="a nw" style="left:1235px;top:705.4px;font-size:17.75px;line-height:17.3px;color:#757575">Decimals</div>

<div class="a" style="left:454px;top:760px;width:205px;height:40px;background:#e0e0e0;border-radius:20px"></div>
<div class="a" style="left:454px;top:809px;width:205px;height:1.2px;background:#c8c8c8"></div>
<svg style="left:475.5px;top:767.5px;width:22px;height:22px;fill:#333" viewBox="0 0 24 24"><path d="M23 8c0 1.1-.9 2-2 2-.18 0-.35-.02-.51-.07l-3.56 3.55c.05.16.07.34.07.52 0 1.1-.9 2-2 2s-2-.9-2-2c0-.18.02-.36.07-.52l-2.55-2.55c-.16.05-.34.07-.52.07s-.36-.02-.52-.07l-4.55 4.56c.05.16.07.33.07.51 0 1.1-.9 2-2 2s-2-.9-2-2 .9-2 2-2c.18 0 .35.02.51.07l4.56-4.55C8.02 9.36 8 9.18 8 9c0-1.1.9-2 2-2s2 .9 2 2c0 .18-.02.36-.07.52l2.55 2.55c.16-.05.34-.07.52-.07s.36.02.52.07l3.55-3.56C19.020 8.35 19 8.18 19 8c0-1.1.9-2 2-2s2 .9 2 2z"/></svg>
<div class="a nw" style="left:502.0px;top:771.4px;font-size:17.5px;line-height:17.5px;letter-spacing:-0.12px;color:#333;-webkit-text-stroke:0.45px #333">temp...</div>
<svg style="left:581.6px;top:768.3px;width:23.3px;height:23.3px;fill:#333" viewBox="0 0 24 24"><path d="M3 17.25V21h3.75L17.81 9.94l-3.75-3.75L3 17.25zM20.71 7.04c.39-.39.39-1.02 0-1.41l-2.34-2.34c-.39-.39-1.02-.39-1.41 0l-1.83 1.83 3.75 3.75 1.83-1.83z"/></svg>
<svg style="left:617.35px;top:768.6px;width:22.3px;height:22.3px;fill:#333" viewBox="0 0 24 24"><path d="M19 6.41L17.59 5 12 10.59 6.41 5 5 6.41 10.59 12 5 17.59 6.41 19 12 13.41 17.59 19 19 17.59 13.41 12z"/></svg>
<div class="a" style="left:673px;top:760.5px;width:136px;height:49px;border:1.2px solid #dcdcdc;border-radius:5px"></div>
<div class="a nw" style="left:688.75px;top:776.8px;font-size:18.5px;line-height:18.5px;color:#222">Temperature</div>
<div class="a" style="left:826px;top:760.5px;width:72.5px;height:49px;border:1.2px solid #dcdcdc;border-radius:5px"></div>
<svg style="left:840px;top:768px;width:50px;height:30px" viewBox="840 768 50 30"><path d="M844.5 771 V792.3 H868" fill="none" stroke="#333" stroke-width="2.6"/><path d="M846.5 788 L853.5 779.5 L858.5 784 L867 773.5" fill="none" stroke="#333" stroke-width="2.4"/><path d="M871 782.5 L884 782.5 L877.5 789z" fill="#757575"/></svg>
<div class="a" style="left:915.5px;top:760.5px;width:124px;height:49px;border:1.2px solid #dcdcdc;border-radius:5px"></div>
<div class="a nw" style="left:930.5px;top:776.1px;font-size:18.8px;line-height:18.8px;color:#222">default</div>
<svg style="left:1010px;top:780px;width:18px;height:12px" viewBox="0 0 18 12"><path d="M2.5 3.7 L15 3.7 L8.75 10z" fill="#757575"/></svg>
<div class="a" style="left:1055.5px;top:760.5px;width:49px;height:49px;border:1.2px solid #dcdcdc;border-radius:5px"></div>
<div class="a" style="left:1065px;top:770px;width:30px;height:29.5px;background:#0093f4;border-radius:4px"></div>
<div class="a" style="left:1120.5px;top:760.5px;width:99px;height:49px;border:1.2px solid #dcdcdc;border-radius:5px"></div>
<div class="a nw" style="left:1135.5px;top:776.3px;font-size:18.5px;line-height:18.5px;color:#222">°C</div>
<div class="a" style="left:1235.5px;top:760.5px;width:74px;height:49px;border:1.2px solid #dcdcdc;border-radius:5px"></div>
<div class="a nw" style="left:1250px;top:776.3px;font-size:18.5px;line-height:18.5px;color:#222">0</div>
<div class="a" style="left:1286px;top:774px;width:19px;height:23.5px;background:#ececec"></div>
<svg style="left:1286px;top:774px;width:19px;height:24px" viewBox="0 0 19 24"><path d="M4 9.5 L9.5 3.5 L15 9.5z M4 14 L9.5 20 L15 14z" fill="#333"/></svg>
<svg style="left:1333.7px;top:769.9px;width:31.6px;height:31.6px;fill:#8a8a8a" viewBox="0 0 24 24"><path d="M19.14 12.94c.04-.3.06-.61.06-.94 0-.32-.02-.64-.07-.94l2.03-1.58c.18-.14.23-.41.12-.61l-1.92-3.32c-.12-.22-.37-.29-.59-.22l-2.39.96c-.5-.38-1.03-.7-1.62-.94l-.36-2.54c-.04-.24-.24-.41-.48-.41h-3.84c-.24 0-.43.17-.47.41l-.36 2.54c-.59.24-1.13.57-1.62.94l-2.39-.96c-.22-.08-.47 0-.59.22L2.74 8.87c-.12.21-.08.47.12.61l2.03 1.58c-.05.3-.09.63-.09.94s.02.64.07.94l-2.03 1.58c-.18.14-.23.41-.12.61l1.92 3.32c.12.22.37.29.59.22l2.39-.96c.5.38 1.03.7 1.62.94l.36 2.54c.05.24.24.41.48.41h3.84c.24 0 .44-.17.47-.41l.36-2.54c.59-.24 1.13-.56 1.62-.94l2.39.96c.22.08.47 0 .59-.22l1.92-3.32c.12-.22.07-.47-.12-.61l-2.01-1.58zM12 15.6c-1.98 0-3.6-1.62-3.6-3.6s1.62-3.6 3.6-3.6 3.6 1.62 3.6 3.6-1.62 3.6-3.6 3.6z"/></svg>

<div class="a" style="left:438.6px;top:846.2px;width:127px;height:44.4px;border:1.2px solid #dcdcdc;border-radius:5px"></div>
<div class="a nw" style="left:457.8px;top:858.3px;font-size:18.5px;line-height:18.5px;letter-spacing:0.02px;color:#0b5488;-webkit-text-stroke:0.45px #0b5488">Add series</div>

<!-- footer -->
<div class="a nw" style="left:418.7px;top:921.8px;font-size:18px;line-height:18px;letter-spacing:0.26px;color:#0b5488;-webkit-text-stroke:0.45px #0b5488">Cancel</div>
<div class="a nw" style="left:1336.4px;top:921.7px;font-size:17.7px;line-height:17.7px;letter-spacing:0.37px;color:#9a9a9a;-webkit-text-stroke:0.45px #9a9a9a">Preview</div>
<div class="a" style="left:1433.2px;top:909.2px;width:79.5px;height:44.5px;background:#e0e0e0;border-radius:5px"></div>
<div class="a nw" style="left:1456.4px;top:921.7px;font-size:17.7px;line-height:17.7px;letter-spacing:0.25px;color:#9a9a9a;-webkit-text-stroke:0.45px #9a9a9a">Add</div>

<!-- entity alias field + autocomplete -->
<div class="a" style="left:434px;top:483.5px;width:1045px;height:154.5px;border-radius:11px;box-shadow:0 6px 12px rgba(0,0,0,.18)"></div>
<div class="a" style="left:437px;top:486.5px;width:1039px;height:148.5px;background:#fff;border-radius:8px;overflow:hidden">
  <div class="a" style="left:0;top:0;width:1039px;height:68.5px;background:#dfe5ec"></div>
  <div class="a" style="left:0;top:66.5px;width:1039px;height:2px;background:#0b3b60"></div>
  <div class="a" style="left:0;top:79.5px;width:1039px;height:60px;background:#f2f3f3"></div>
</div>
<div class="a nw" style="left:458.3px;top:495.9px;font-size:16.27px;line-height:16.27px;color:#4a7ea8">Entity alias*</div>
<div class="a nw" style="left:458.9px;top:519.7px;font-size:20.95px;line-height:20.95px;color:#1b1b1b">Chart temperature</div>
<div class="a" style="left:630.5px;top:519.5px;width:1.6px;height:24px;background:#0b5488"></div>
<svg style="left:1431.25px;top:507px;width:29px;height:29px;fill:#1b1b1b" viewBox="0 0 24 24"><path d="M19 6.41L17.59 5 12 10.59 6.41 5 5 6.41 10.59 12 5 17.59 6.41 19 12 13.41 17.59 19 19 17.59 13.41 12z"/></svg>
<div class="a nw" style="left:458.4px;top:584.7px;font-size:20.99px;line-height:20.99px;color:#222">'Chart...' not found.</div>
<div class="a nw" style="left:642.6px;top:585px;font-size:20.56px;line-height:20.56px;color:#1a7bd0">Create a new one!</div>
<div class="a" style="left:642px;top:607.7px;width:170px;height:1.3px;background:#3b5cc4"></div>
<div class="a" style="left:435.3px;top:483.8px;width:1043.5px;height:154.5px;border:3.2px solid #fcc53e;border-radius:11px;box-shadow:inset 0 0 4px rgba(252,197,62,.5),0 0 3px rgba(252,197,62,.45)"></div>


<!-- ============ CALLOUTS ============ -->
<div class="a" style="left:1261.6px;top:410.6px;width:220.4px;height:51px;border:3.2px solid #fcc53e;border-radius:11px;box-shadow:0 0 4px rgba(252,197,62,.55),inset 0 0 3px rgba(252,197,62,.4)"></div>
<svg style="left:1380px;top:375px;width:30px;height:45px" viewBox="1380 375 30 45"><path d="M1394 383 V410" stroke="#fcc53e" stroke-width="3.2" stroke-dasharray="8.5 5.5"/><circle cx="1394" cy="411" r="5" fill="#fcc53e"/></svg>
<div class="a" style="left:1350.6px;top:341.2px;width:258.4px;height:41.8px;background:#fcefdf;border:3.2px solid #fcc53e;border-radius:11px;box-shadow:0 0 4px rgba(252,197,62,.55)"></div>
<div class="a nw" style="left:1358.2px;top:349px;font-size:27.8px;line-height:27.8px;color:#000">Select "Entity alias"</div>
<div class="a" style="left:1374.6px;top:309.4px;width:29.4px;height:34.6px;background:#fff;border:3.2px solid #fcc53e;border-radius:9px;box-shadow:0 0 4px rgba(252,197,62,.55)"></div>
<div class="a nw" style="left:1380.5px;top:314.1px;font-size:26.6px;line-height:26.6px;color:#000">7</div>

<svg style="left:1430px;top:628px;width:25px;height:65px" viewBox="1430 628 25 65"><path d="M1442 641 V690" stroke="#fcc53e" stroke-width="3.2" stroke-dasharray="8.5 5.5"/><circle cx="1442" cy="637.5" r="5" fill="#fcc53e"/></svg>
<div class="a" style="left:1368.2px;top:689.8px;width:430px;height:107.8px;background:#fcefdf;border:3.2px solid #fcc53e;border-radius:11px;box-shadow:0 0 4px rgba(252,197,62,.55)"></div>
<div class="a nw" style="left:1376px;top:697.4px;font-size:27.86px;line-height:27.86px;color:#000">Enter the name of the future alias</div>
<div class="a nw" style="left:1376px;top:730.6px;font-size:27.86px;line-height:27.86px;color:#000">in the "Entity alias" field,</div>
<div class="a nw" style="left:1376px;top:763.4px;font-size:27.86px;line-height:27.86px;color:#000">and click the "Create a new one!"</div>
<div class="a" style="left:1395.2px;top:657.7px;width:27.6px;height:33.7px;background:#fff;border:3.2px solid #fcc53e;border-radius:9px;box-shadow:0 0 4px rgba(252,197,62,.55)"></div>
<div class="a nw" style="left:1401px;top:661.9px;font-size:26.6px;line-height:26.6px;color:#000">8</div>

<svg style="left:620px;top:600px;width:210px;height:25px" viewBox="620 600 210 25"><path d="M633.5 612.6 Q700 610 760 612.6 Q800 613.8 820 614.4" fill="none" stroke="#fcc53e" stroke-width="2.6" stroke-linecap="round"/></svg>
<svg style="left:717px;top:604px;width:18px;height:28px;overflow:visible" viewBox="0 0 18 28"><path d="M4.3 13 V1.6 Q4.3 0 6 0 Q7.6 0 7.6 1.6 V5.2 H9.8 L10.2 6.2 H12.6 L13.4 7.4 H14.8 L16.7 9.2 V14.8 L15.2 18.5 L14.8 20.7 H5.2 L4.6 18.5 L0.6 12.2 L0 10 L0.6 9.1 H2.6 L4.3 11 Z" fill="#fff" stroke="#fff" stroke-width="2.6" stroke-linejoin="round"/>
<path d="M4.3 13 V1.6 Q4.3 0 6 0 Q7.6 0 7.6 1.6 V5.2 H9.8 L10.2 6.2 H12.6 L13.4 7.4 H14.8 L16.7 9.2 V14.8 L15.2 18.5 L14.8 20.7 H5.2 L4.6 18.5 L0.6 12.2 L0 10 L0.6 9.1 H2.6 L4.3 11 Z" fill="#fff" stroke="#000" stroke-width="1.1"/>
<path d="M7.6 5.2 V9.8 M10.6 6.4 V10.2 M13.6 7.6 V10.6" stroke="#000" stroke-width="1"/>
<rect x="5.2" y="20.9" width="9.6" height="5.5" fill="#fcc53e" stroke="#000" stroke-width="1.1"/>
<rect x="11.3" y="22.6" width="2.2" height="2.2" fill="#000"/></svg>
<svg style="left:1407px;top:446px;width:18px;height:28px;overflow:visible" viewBox="0 0 18 28"><path d="M4.3 13 V1.6 Q4.3 0 6 0 Q7.6 0 7.6 1.6 V5.2 H9.8 L10.2 6.2 H12.6 L13.4 7.4 H14.8 L16.7 9.2 V14.8 L15.2 18.5 L14.8 20.7 H5.2 L4.6 18.5 L0.6 12.2 L0 10 L0.6 9.1 H2.6 L4.3 11 Z" fill="#fff" stroke="#fff" stroke-width="2.6" stroke-linejoin="round"/>
<path d="M4.3 13 V1.6 Q4.3 0 6 0 Q7.6 0 7.6 1.6 V5.2 H9.8 L10.2 6.2 H12.6 L13.4 7.4 H14.8 L16.7 9.2 V14.8 L15.2 18.5 L14.8 20.7 H5.2 L4.6 18.5 L0.6 12.2 L0 10 L0.6 9.1 H2.6 L4.3 11 Z" fill="#fff" stroke="#000" stroke-width="1.1"/>
<path d="M7.6 5.2 V9.8 M10.6 6.4 V10.2 M13.6 7.6 V10.6" stroke="#000" stroke-width="1"/>
<rect x="5.2" y="20.9" width="9.6" height="5.5" fill="#fcc53e" stroke="#000" stroke-width="1.1"/>
<rect x="11.3" y="22.6" width="2.2" height="2.2" fill="#000"/></svg>

<div class="a nw" style="left:1673.5px;top:1056px;font-size:14.5px;line-height:14.5px;color:#1c1c1c">Powered by <span style="color:#0b4f8a;letter-spacing:0.33px;-webkit-text-stroke:0.35px #0b4f8a">Thingsboard v.3.6.3</span></div>

</body></html>
